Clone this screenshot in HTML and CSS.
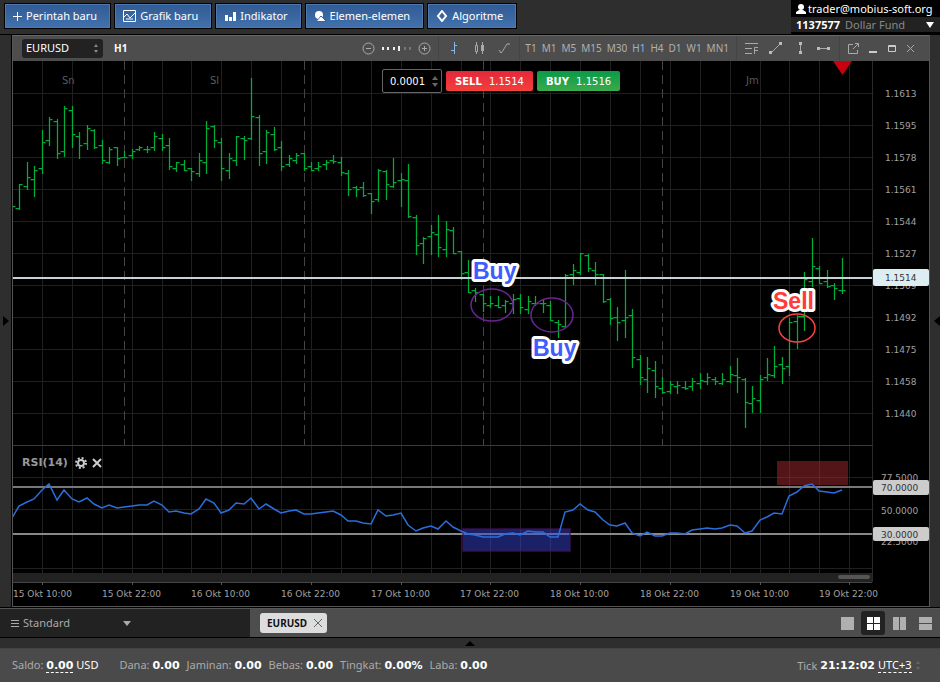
FILE: index.html
```html
<!DOCTYPE html>
<html lang="id">
<head>
    <meta charset="utf-8">
    <title>EURUSD H1</title>
    <link rel="stylesheet" href="styles.css">
</head>
<body>
<header class="topbar">
    <nav class="menu">
        <button class="menu-btn"><svg width="9" height="10"><path d="M4.5 1v9M0 5.5h9" stroke="#fff"/></svg>Perintah baru</button>
        <button class="menu-btn"><svg width="13" height="12"><path d="M.5.5h12v11H.5zM1 7l3-3 3 4 5-5M3 9h7" fill="none" stroke="#fff"/></svg>Grafik baru</button>
        <button class="menu-btn"><svg width="12" height="12"><path d="M1 5h3v6H1zM5 7h3v4H5zM9 2h3v9H9z" fill="#fff"/></svg>Indikator</button>
        <button class="menu-btn"><svg width="12" height="12"><circle cx="5" cy="5" r="4" fill="#fff"/><path d="M7 6l5 5H3z" fill="#fff" stroke="#36609b"/><path d="M7 7l4 4H3z" fill="#fff"/></svg>Elemen-elemen</button>
        <button class="menu-btn"><svg width="12" height="12"><path d="M6 1l4 5-4 5-4-5z" fill="none" stroke="#fff" stroke-width="2"/></svg>Algoritme</button>
    </nav>
    <div class="account">
        <div class="user"><svg width="10" height="10"><circle cx="5" cy="3" r="3" fill="#fff"/><path d="M0 10V8l3-2h4l3 2v2z" fill="#fff"/></svg>trader@mobius-soft.org</div>
        <button class="fund"><b>1137577</b><span>Dollar Fund</span><i class="down"></i></button>
    </div>
</header>

<main class="workspace">
    <button class="side side-left" aria-label="Panel kiri"></button>
    <section class="window">
        <div class="toolbar">
            <div class="pick symbol">
                <select aria-label="Simbol"><option>EURUSD</option></select>
                <svg width="6" height="9"><path d="M3 0l2 3H1zM3 9l2-3H1z" fill="#888"/></svg>
            </div>
            <b class="period">H1</b>
            <div class="group zoom">
                <button aria-label="Perkecil"><svg width="13" height="13"><circle cx="6.5" cy="6.5" r="5.5"/><path d="M4 6.5h5"/></svg></button>
                <svg width="31" height="13"><path d="M2 5v3M7 5v3M13 5v3M18 4v5" stroke="#eee" stroke-width="2"/><path d="M24 5v3M29 5v3" stroke="#777" stroke-width="2"/></svg>
                <button aria-label="Perbesar"><svg width="13" height="13"><circle cx="6.5" cy="6.5" r="5.5"/><path d="M4 6.5h5M6.500 4v5"/></svg></button>
            </div>
            <div class="group types">
                <button class="on" aria-label="Batang"><svg width="16" height="14"><path d="M8.500 1v12M5 9.500h3M8 4.500h3"/></svg></button>
                <button aria-label="Lilin"><svg width="16" height="14"><path d="M5.500 1v12M11.500 1v12"/><path d="M4.500 4.500h2v6h-2z" fill="#4d4d4d"/><path d="M10 4h3v6h-3z" fill="#aaa" stroke="none"/></svg></button>
                <button aria-label="Garis"><svg width="16" height="14"><path d="M3 9l2 3c2-2 4-6 6-9h3"/></svg></button>
            </div>
            <div class="group frames">
                <button>T1</button><button>M1</button><button>M5</button><button>M15</button><button>M30</button><button class="on">H1</button><button>H4</button><button>D1</button><button>W1</button><button>MN1</button>
            </div>
            <div class="group draw">
                <button aria-label="Fibonacci"><svg width="14" height="14"><path d="M0 2.500h13M0 7.500h7M0 12.500h7M9.500 13V6.500H13M10 9.500h3"/></svg></button>
                <button aria-label="Garis tren"><svg width="14" height="14"><path d="M2 12L11 3"/><path d="M0 10h3v3H0zM10 1h3v3h-3z" fill="#bbb" stroke="none"/></svg></button>
                <button aria-label="Garis vertikal"><svg width="14" height="14"><path d="M7.500 3v8"/><path d="M6 1h3v3H6zM6 10h3v3H6z" fill="#bbb" stroke="none"/></svg></button>
                <button aria-label="Garis horizontal"><svg width="14" height="14"><path d="M3 7.500h8"/><path d="M0 6h3v3H0zM10 6h3v3h-3z" fill="#bbb" stroke="none"/></svg></button>
            </div>
            <div class="group win">
                <button aria-label="Lepas"><svg width="11" height="11"><path d="M5 1.500H.5v9h9V7M7 .5h3.500V4M10 1L5 6"/></svg></button>
                <button aria-label="Kecilkan"><svg width="11" height="11"><path d="M2 9h8" stroke="#ccc" stroke-width="2"/></svg></button>
                <button aria-label="Besarkan"><svg width="11" height="11"><path d="M2.500 2.500h7v6h-7zM2 3.500h8" stroke="#ccc"/></svg></button>
                <button aria-label="Tutup"><svg width="11" height="11"><path d="M2 2l7 7M9 2l-7 7"/></svg></button>
            </div>
        </div>
        <div class="chart-box">
            <svg id="chart" class="chart"></svg>
            <div class="order">
                <div class="volume">
                    <input type="text" value="0.0001" aria-label="Volume">
                    <svg width="6" height="11"><path d="M3 0l3 4H0zM3 11l3-4H0z" fill="#666"/></svg>
                </div>
                <button class="sell"><b>SELL</b> 1.1514</button>
                <button class="buy"><b>BUY</b> 1.1516</button>
            </div>
            <div class="rsi-head">
                <b>RSI(14)</b>
                <button aria-label="Pengaturan RSI"><svg width="12" height="12"><circle cx="6" cy="6" r="5" fill="none" stroke="#ccc" stroke-width="2" stroke-dasharray="2 1.927"/><circle cx="6" cy="6" r="3" fill="none" stroke="#ccc" stroke-width="2"/></svg></button>
                <button aria-label="Hapus RSI"><svg width="10" height="10"><path d="M1 1l8 8M9 1l-8 8" stroke="#ccc" stroke-width="2"/></svg></button>
            </div>
        </div>
    </section>
    <button class="side side-right" aria-label="Panel kanan"></button>
</main>

<div class="tabs">
    <button class="profile"><svg width="8" height="9"><path d="M0 1.500h8M0 4.500h8M0 7.500h8" stroke="#aaa"/></svg>Standard<i class="down"></i></button>
    <div class="tab"><b>EURUSD</b><button aria-label="Tutup tab"><svg width="8" height="8"><path d="M0 0l8 8M8 0l-8 8" stroke="#666"/></svg></button></div>
    <div class="layouts">
        <button aria-label="Satu"><svg width="13" height="13"><path d="M0 0h13v13H0z"/></svg></button>
        <button class="on" aria-label="Kisi"><svg width="13" height="13"><path d="M0 0h6v6H0zM7 0h6v6H7zM0 7h6v6H0zM7 7h6v6H7z"/></svg></button>
        <button aria-label="Kolom"><svg width="13" height="13"><path d="M0 0h6v13H0zM7 0h6v13H7z"/></svg></button>
        <button aria-label="Baris"><svg width="13" height="13"><path d="M0 0h13v6H0zM0 7h13v6H0z"/></svg></button>
    </div>
</div>
<button class="splitter" aria-label="Buka panel bawah"></button>
<footer class="status">
    <div class="balance">Saldo: <b class="dash">0.00</b> <span class="usd">USD</span></div>
    <div>Dana: <b>0.00</b></div>
    <div>Jaminan: <b>0.00</b></div>
    <div>Bebas: <b>0.00</b></div>
    <div>Tingkat: <b>0.00%</b></div>
    <div>Laba: <b>0.00</b></div>
    <div class="clock">Tick <b>21:12:02</b>
        <select class="dash" aria-label="Zona waktu"><option>UTC+3</option></select>
        <svg width="6" height="9"><path d="M3 0l2 3H1zM3 9l2-3H1z" fill="#666"/></svg>
    </div>
</footer>
<script src="chart.js"></script>
</body>
</html>
```
FILE: styles.css
```css
*{
    box-sizing:border-box;
}
body{
    margin:0;
    height:100vh;
    display:flex;
    flex-direction:column;
    background:#000;
    color:#fff;
    font:11px/14px "Noto Sans", Tahoma, sans-serif;
    overflow:hidden;
}
button,select,input{
    font:inherit;
    color:inherit;
    background:none;
    border:0;
    padding:0;
    margin:0;
    appearance:none;
}
svg{
    display:block;
    flex:none;
}
.topbar{
    display:flex;
    justify-content:space-between;
    height:35px;
    background:#2e2e2e;
    border-bottom:1px solid #000;
}
.menu{
    display:flex;
    gap:3px;
    padding:3px 4px;
}
.menu-btn{
    display:flex;
    align-items:center;
    gap:4px;
    height:26px;
    padding:0 13px 0 8px;
    background:linear-gradient(#315a92,#4272ae);
    border:1px solid #000;
    box-shadow:inset 0 0 0 1px #4c79b0;
    white-space:nowrap;
}
.account{
    width:149px;
    background:#000;
}
.user{
    display:flex;
    align-items:center;
    gap:2px;
    height:17px;
    padding-left:5px;
}
.fund{
    display:flex;
    align-items:center;
    width:100%;
    height:15px;
    padding:0 6px 0 5px;
    background:#222;
    gap:5px;
}
.fund span{
    color:#888;
}
.down{
    margin-left:auto;
    border:4px solid transparent;
    border-top:6px solid #fff;
    border-bottom:0;
}
.workspace{
    flex:1;
    min-height:0;
    display:flex;
    background:#2e2e2e;
}
.side{
    width:10px;
    display:flex;
    align-items:center;
    justify-content:flex-end;
}
.side-left{
    width:12px;
    border-right:1px solid #000;
    justify-content:flex-start;
    padding-left:3px;
}
.side::before{
    content:"";
    border:5px solid transparent;
    border-right:6px solid #000;
    border-left:0;
}
.side-left::before{
    border-left:6px solid #000;
    border-right:0;
}
.window{
    flex:1;
    min-width:0;
    display:flex;
    flex-direction:column;
    border:solid #555;
    border-width:0 1px 1px;
}
.toolbar{
    display:flex;
    align-items:center;
    height:26px;
    padding:0 0 1px 9px;
    background:#4d4d4d;
    border-top:1px solid #666;
}
.pick{
    display:flex;
    align-items:center;
    justify-content:space-between;
}
.symbol{
    width:81px;
    height:19px;
    padding:0 4px;
    background:#222;
    border-radius:3px;
}
.symbol select{
    flex:1;
}
.period{
    margin:0 auto 0 11px;
    font-size:10px;
}
.group{
    display:flex;
    align-items:center;
    height:100%;
    border-right:1px solid #444;
    color:#b0b0b0;
}
.group svg{
    fill:none;
    stroke:#aaa;
}
.zoom{
    gap:6px;
    padding-right:7px;
}
.types{
    gap:9px;
    padding:0 7px;
}
.types .on svg{
    stroke:#86b8ee;
}
.frames{
    gap:5px;
    padding:0 7px 0 5px;
    font-size:10px;
}
.frames .on{
    color:#86b8ee;
}
.draw{
    gap:10px;
    padding:0 8px;
}
.win{
    gap:8px;
    padding:0 13px 0 8px;
    border:0;
}
.chart-box{
    position:relative;
    flex:1;
    min-height:0;
    background:#000;
}
.chart{
    width:100%;
    height:100%;
    font:9px "DejaVu Sans", Verdana, sans-serif;
}
.chart text{
    fill:#a0a0a0;
}
.chart .day{
    fill:#5a5a5a;
    font-size:10px;
}
.chart .dark{
    fill:#333;
}
.chart .note{
    font:bold 23px "Liberation Sans", Arial, sans-serif;
    stroke:#fff;
    stroke-width:6px;
    stroke-linejoin:round;
    paint-order:stroke;
}
.chart .note-buy{
    fill:#3f5cff;
}
.chart .note-sell{
    fill:#ff3b3b;
}
.order{
    position:absolute;
    top:8px;
    left:369px;
    display:flex;
    align-items:center;
    gap:4px;
    font:10px/14px "DejaVu Sans", Verdana, sans-serif;
}
.volume{
    display:flex;
    align-items:center;
    width:60px;
    height:24px;
    padding:1px 3px 0 7px;
    background:#000;
    border:1px solid #666;
    border-radius:2px;
}
.volume input{
    flex:1;
    min-width:0;
}
.sell,.buy{
    height:20px;
    padding:1px 9px 0;
    border-radius:2px;
    background:linear-gradient(#e4283a,#f2403a);
    white-space:pre;
}
.sell b,.buy b{
    margin-right:4px;
}
.buy{
    background:linear-gradient(#0a9a48,#3aab4a);
}
.rsi-head{
    position:absolute;
    top:72%;
    left:9px;
    display:flex;
    align-items:center;
    gap:5px;
    margin-top:3px;
    color:#999;
    font:11px/14px "DejaVu Sans", Verdana, sans-serif;
}
.rsi-head b{
    margin-right:2px;
}
.tabs{
    display:flex;
    align-items:center;
    height:30px;
    margin-top:1px;
    background:#4d4d4d;
    border-top:1px solid #555;
    border-bottom:1px solid #000;
}
.profile{
    display:flex;
    align-items:center;
    gap:4px;
    width:250px;
    height:100%;
    padding-left:11px;
    background:#222;
    color:#aaa;
}
.profile .down{
    margin-right:119px;
    border-top:5px solid #aaa;
    border-bottom:0;
}
.tab{
    display:flex;
    align-items:center;
    gap:7px;
    height:20px;
    margin-left:10px;
    padding:0 5px 0 7px;
    background:#ddd;
    color:#111;
    border-radius:3px;
    font-size:10px;
}
.layouts{
    display:flex;
    gap:2px;
    margin-left:auto;
    padding-right:3px;
}
.layouts button{
    display:grid;
    place-items:center;
    width:24px;
    height:24px;
    border-radius:3px;
    fill:#b0b0b0;
}
.layouts .on{
    background:#222;
    fill:#fff;
}
.splitter{
    display:grid;
    place-items:center;
    height:10px;
    background:#2e2e2e;
}
.splitter::before{
    content:"";
    border:5px solid transparent;
    border-bottom:5px solid #000;
    border-top:0;
}
.status{
    display:flex;
    align-items:center;
    gap:7px;
    height:34px;
    padding:0 19px 0 12px;
    background:#4a4a4a;
    border-top:1px solid #444;
    color:#aaa;
    white-space:nowrap;
}
.status b{
    color:#fff;
    font:bold 11px/14px "DejaVu Sans", Verdana, sans-serif;
}
.balance{
    margin-right:14px;
}
.usd{
    color:#fff;
}
.status .dash{
    color:#fff;
    border-bottom:1px dashed #fff;
}
.clock{
    display:flex;
    align-items:center;
    gap:3px;
    margin-left:auto;
}
```
FILE: chart.js
```js
// [open, high, low, close] of each bar, in chart units from the top of the window
var bars = [
    [210,205,210,206],[208,184,209,184],[186,162,189,177],[179,166,196,170],[168,130,173,142],[140,117,145,119],[121,119,158,153],[151,106,156,108],
    [110,106,147,134],[136,132,158,145],[143,125,149,128],[130,129,148,147],[145,140,163,160],[162,147,163,149],[147,147,165,158],[157,151,157,157],
    [155,149,158,151],[149,146,150,147],[149,146,152,149],[147,132,150,136],[138,134,150,147],[145,138,169,166],[168,162,171,162],[164,160,170,170],
    [168,168,180,171],[173,153,176,160],[162,121,173,128],[126,125,147,140],[142,138,180,168],[170,153,178,158],[160,136,165,136],[138,136,159,140],
    [138,78,139,116],[117,115,165,153],[151,130,163,132],[134,127,150,149],[147,141,170,166],[164,155,166,158],[160,153,163,155],[153,153,170,168],
    [166,162,170,170],[168,162,170,166],[164,160,169,162],[160,155,163,161],[162,157,175,172],[173,170,195,189],[187,186,196,189],[187,182,196,195],
    [193,193,213,201],[199,169,201,170],[171,170,199,184],[186,158,187,182],[180,173,206,179],[180,164,217,216],[217,215,254,245],[243,237,263,238],
    [236,225,254,232],[234,215,256,247],[249,221,256,229],[230,227,253,253],[251,251,279,273],[272,260,292,292],[290,288,301,292],[294,294,311,303],
    [305,296,307,303],[305,296,307,307],[305,300,312,301],[303,294,313,299],[298,294,313,307],[309,296,313,301],[303,296,305,303],[303,300,312,303],
    [305,301,320,320],[322,320,337,324],[326,274,327,275],[274,264,284,270],[272,253,274,253],[255,254,271,268],[270,262,284,274],[274,274,302,301],
    [299,298,324,318],[317,307,340,322],[320,270,337,317],[315,309,367,357],[359,355,384,377],[379,357,392,368],[370,361,397,386],[388,377,393,392],
    [391,381,393,384],[386,381,393,385],[387,381,389,388],[386,378,390,381],[383,373,388,380],[381,373,384,377],[379,377,384,381],[383,373,384,379],
    [381,366,382,374],[375,358,392,377],[379,378,427,402],[403,386,412,398],[400,375,412,379],[377,358,380,374],[375,346,377,366],[364,357,383,368],
    [366,318,375,322],[321,315,348,316],[316,272,330,279],[281,238,286,266],[268,266,283,283],[281,270,287,286],[285,283,299,288],[290,258,293,290]
];
var rsi = [518,506,502,499,490,484,500,490,499,502,498,504,508,505,508,507,506,505,505,501,505,512,511,513,514,509,499,503,513,510,503,504,498,509,504,509,513,511,510,514,
    514,513,512,511,515,521,521,523,524,510,516,515,513,525,531,528,526,529,521,527,531,534,535,537,537,537,534,533,535,531,532,532,537,537,512,510,504,510,512,520,
    525,526,523,533,536,532,536,536,533,533,534,530,529,528,529,528,525,526,533,531,520,517,513,514,496,492,486,484,491,492,493,490];
var prices = ['1.1613','1.1595','1.1578','1.1561','1.1544','1.1527','1.1509','1.1492','1.1475','1.1458','1.1440'];
var times = ['15 Okt 10:00','15 Okt 22:00','16 Okt 10:00','16 Okt 22:00','17 Okt 10:00','17 Okt 22:00','18 Okt 10:00','18 Okt 22:00','19 Okt 10:00','19 Okt 22:00'];

function draw() {
    var svg = document.getElementById('chart');
    var w = svg.clientWidth, h = svg.clientHeight;
    var plot = w - 57;
    var X = v => Math.round((v - 13) * plot / 859);
    var Y = v => Math.round((v - 61) * h / 545);
    var barX = i => X(12 + i * 7.475);
    var out = '';
    var line = (x1, y1, x2, y2, color, extra) => {
        out += `<path d="M${x1} ${y1}L${x2} ${y2}" stroke="${color}" ${extra || ''}/>`;
    };
    var rect = (x, y, x2, y2, extra) => {
        out += `<rect x="${x}" y="${y}" width="${x2 - x}" height="${y2 - y}" ${extra}/>`;
    };
    var text = (x, y, s, cls) => {
        out += `<text x="${x}" y="${y}" class="${cls || ''}">${s}</text>`;
    };
    var ellipse = (x, y, rx, ry, color) => {
        out += `<ellipse cx="${X(x)}" cy="${Y(y)}" rx="${rx}" ry="${ry}" fill="none" stroke="${color}" stroke-width="1.5"/>`;
    };

    // grid
    for (let i = 4; i < 115; i += 4) line(barX(i) + .5, 0, barX(i) + .5, Y(573), '#202020');
    line(plot + .5, 0, plot + .5, Y(582), '#2a2a2a');
    for (let i = 0; i < 14; i++) line(0, Y(93 + i * 32) + .5, plot + 2, Y(93 + i * 32) + .5, '#202020');
    line(0, Y(568) + .5, plot, Y(568) + .5, '#202020');
    line(0, Y(445) + .5, plot, Y(445) + .5, '#3a3a3a');
    [15, 39, 63, 87].forEach(i => line(barX(i) + .5, 0, barX(i) + .5, Y(445), '#444', 'stroke-dasharray="9 5"'));
    text(X(62), Y(84), 'Sn', 'day');
    text(X(210), Y(84), 'Sl', 'day');
    text(X(746), Y(84), 'Jm', 'day');

    // price bars
    var d = '';
    bars.forEach((b, i) => {
        var x = barX(i) + .5;
        d += `M${x} ${Y(b[1])}V${Y(b[2]) + 1}M${x - 4} ${Y(b[0]) + .5}H${x}M${x} ${Y(b[3]) + .5}H${x + 3}`;
    });
    out += `<path d="${d}" fill="none" stroke="#00ac3a" stroke-width="1.25"/>`;
    line(0, Y(278), plot, Y(278), '#c3d3d6', 'stroke-width="2"');

    // rsi
    line(0, Y(487), plot, Y(487), '#777', 'stroke-width="2"');
    line(0, Y(534), plot, Y(534), '#888', 'stroke-width="2"');
    rect(X(463), Y(529), X(570), Y(551), 'fill="#3442cc" fill-opacity=".5" stroke="#43105a" stroke-opacity=".6" stroke-width="2"');
    rect(X(777), Y(461), X(848), Y(485), 'fill="#a52a30" fill-opacity=".5"');
    out += `<polyline points="${rsi.map((v, i) => barX(i) + ',' + Y(v)).join(' ')}" fill="none" stroke="#2a6edb" stroke-width="1.5"/>`;

    // scrollbar and time axis
    rect(0, Y(573), plot, Y(582), 'fill="#222"');
    rect(X(838), Y(575), X(870), Y(579), 'rx="2" fill="#555"');
    line(0, Y(582) + .5, plot, Y(582) + .5, '#444');
    times.forEach((t, i) => {
        var x = barX(4 + i * 12);
        line(x + .5, Y(582), x + .5, Y(585), '#555');
        text(Math.max(0, x - 30), Y(597), t);
    });

    // price axis
    prices.forEach((p, i) => text(plot + 13, Y(97 + i * 32), p));
    text(plot + 9, Y(481), '77.5000');
    text(plot + 9, Y(514), '50.0000');
    text(plot + 9, Y(545), '22.5000');
    rect(plot + 1, Y(269), w, Y(286), 'rx="2" fill="#dceef2"');
    text(plot + 13, Y(281), '1.1514', 'dark');
    rect(plot + 1, Y(480), w, Y(495), 'rx="2" fill="#ccc"');
    text(plot + 9, Y(491), '70.0000', 'dark');
    rect(plot + 1, Y(527), w, Y(541), 'rx="2" fill="#ccc"');
    text(plot + 9, Y(538), '30.0000', 'dark');

    // marks
    out += `<path d="M${X(833)} 0h19l-9.500 14z" fill="#c8000f"/>`;
    ellipse(492, 305, 21, 16, '#6a2492');
    ellipse(552, 315, 21, 17, '#6a2492');
    ellipse(797, 328, 18, 14, '#f84444');
    text(X(473), Y(279), 'Buy', 'note note-buy');
    text(X(533), Y(356), 'Buy', 'note note-buy');
    text(X(773), Y(309), 'Sell', 'note note-sell');
    svg.innerHTML = out;
}
draw();
window.onresize = draw;
```
